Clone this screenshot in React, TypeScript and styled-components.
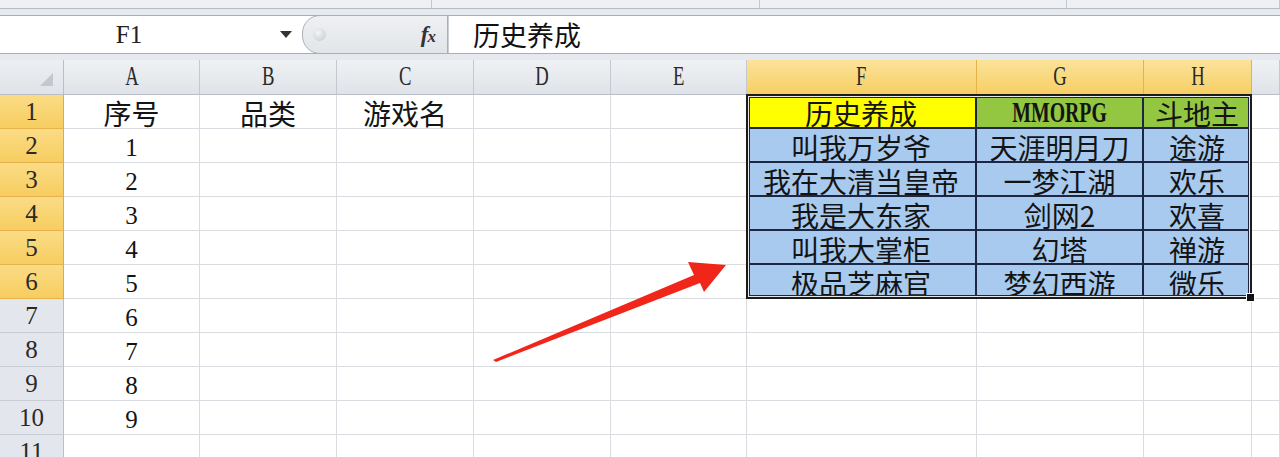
import React from 'react';
import styled, { createGlobalStyle } from 'styled-components';

const GlobalStyle = createGlobalStyle`
  html, body {
    margin: 0;
    padding: 0;
    background: #ffffff;
  }
  body {
    font-family: "Noto Sans CJK SC", "Liberation Sans", sans-serif;
  }
`;

const latinFont = '"Liberation Serif", "DejaVu Serif", serif';

const Screen = styled.div`
  position: relative;
  width: 1280px;
  height: 457px;
  overflow: hidden;
  background: #e6e9ed;
`;

const RibbonEdge = styled.div`
  display: grid;
  grid-template-columns: 432px 328px 307px 1fr;
  height: 8px;
  border-bottom: 1px solid #b4bcc6;
  background: #eef0f3;

  & > div {
    border-right: 1px solid #c4cad2;
  }
`;

const FormulaRow = styled.div`
  display: flex;
  height: 37px;
  margin: 6px 0 6px;
  background: #ffffff;
  border-top: 1px solid #a7afb9;
  border-bottom: 1px solid #a7afb9;
`;

const NameBox = styled.div`
  display: flex;
  align-items: center;
  width: 302px;
  font-family: ${latinFont};
  font-size: 25px;
  color: #222;
`;

const NameText = styled.span`
  flex: 1;
  text-align: center;
  padding-right: 22px;
`;

const DropArrow = styled.span`
  width: 0;
  height: 0;
  margin-right: 10px;
  border-left: 6px solid transparent;
  border-right: 6px solid transparent;
  border-top: 7px solid #333;
`;

const FxArea = styled.div`
  display: flex;
  align-items: center;
  justify-content: space-between;
  width: 146px;
  padding: 0 12px 0 10px;
  box-sizing: border-box;
  background: linear-gradient(#eef0f3, #e2e5e9);
  border: 1px solid #a9b0ba;
  border-radius: 18px 0 0 18px;
  margin: -1px 0;
`;

const Knob = styled.span`
  width: 13px;
  height: 13px;
  border-radius: 50%;
  background: radial-gradient(circle at 40% 35%, #f4f4f4, #c4c7cc);
`;

const Fx = styled.span`
  font-family: "Liberation Serif", serif;
  font-style: italic;
  font-weight: bold;
  font-size: 23px;
  color: #333;
  letter-spacing: -1px;

  & sub {
    font-size: 17px;
    vertical-align: 0;
  }
`;

const FormulaInput = styled.div`
  flex: 1;
  display: flex;
  align-items: center;
  padding-left: 24px;
  border-left: 1px solid #c9ced5;
  font-size: 27px;
  color: #111;
`;

const Sheet = styled.div`
  display: grid;
  grid-template-columns: 64px 136px 137px 137px 137px 136px 230px 167px 108px 1fr;
  grid-template-rows: 35px repeat(11, 34px);
  background: #ffffff;
`;

const Corner = styled.div`
  grid-row: 1;
  grid-column: 1;
  position: relative;
  background: linear-gradient(#eceff3, #dfe3e8);
  border-right: 1px solid #b8bfc8;
  border-bottom: 1px solid #b8bfc8;

  &::after {
    content: '';
    position: absolute;
    right: 10px;
    bottom: 8px;
    border-left: 13px solid transparent;
    border-bottom: 13px solid #c3c8cf;
  }
`;

const ColHead = styled.div<{ $col: number; $active?: boolean }>`
  grid-row: 1;
  grid-column: ${(p) => p.$col};
  display: flex;
  align-items: center;
  justify-content: center;
  font-family: ${latinFont};
  font-size: 22px;
  color: #2a2a2a;
  background: ${(p) =>
    p.$active ? 'linear-gradient(#fbe39b, #f7cf63)' : 'linear-gradient(#eff1f4, #dfe3e8)'};
  border-right: 1px solid ${(p) => (p.$active ? '#e7b24a' : '#c3c9d1')};
  border-bottom: 1px solid ${(p) => (p.$active ? '#e9a93a' : '#b8bfc8')};
  box-sizing: border-box;

  & > span {
    display: inline-block;
    transform: scale(0.85, 1.2);
  }
`;

const RowHead = styled.div<{ $row: number; $active?: boolean }>`
  grid-row: ${(p) => p.$row};
  grid-column: 1;
  display: flex;
  align-items: center;
  justify-content: center;
  font-family: ${latinFont};
  font-size: 25px;
  color: #2a2a2a;
  background: ${(p) => (p.$active ? 'linear-gradient(#fbdc86, #f6cd5f)' : '#e3e7ed')};
  border-right: 1px solid ${(p) => (p.$active ? '#e9a93a' : '#b8bfc8')};
  border-bottom: 1px solid ${(p) => (p.$active ? '#e7b24a' : '#c5ccd5')};
  box-sizing: border-box;
`;

type Fill = 'yellow' | 'green' | 'blue';

const fills: Record<Fill, string> = {
  yellow: '#ffff00',
  green: '#93c641',
  blue: '#a8caef',
};

const Cell = styled.div<{ $row: number; $col: number; $fill?: Fill; $latin?: boolean }>`
  grid-row: ${(p) => p.$row};
  grid-column: ${(p) => p.$col};
  display: flex;
  align-items: center;
  justify-content: center;
  white-space: nowrap;
  box-sizing: border-box;
  background: ${(p) => (p.$fill ? fills[p.$fill] : '#ffffff')};
  border-right: ${(p) => (p.$fill ? '2px solid #1d2744' : '1px solid #d9dce0')};
  border-bottom: ${(p) => (p.$fill ? '2px solid #1d2744' : '1px solid #d9dce0')};
  font-family: ${(p) => (p.$latin ? latinFont : '"Noto Sans CJK SC", sans-serif')};
  font-size: ${(p) => (p.$latin ? '25px' : '28px')};
  color: #141414;
  line-height: 1;
  padding-top: 3px;
`;

const Tall = styled.span`
  display: inline-block;
  font-size: 22px;
  font-weight: bold;
  transform: scale(0.9, 1.35);
`;

const Frame = styled.div`
  grid-row: 2 / 8;
  grid-column: 7 / 10;
  position: relative;
  margin: -1px 0 0 -1px;
  border: 2px solid #1c1c1c;
  box-shadow: inset 0 0 0 1px #e8e8e8, inset 0 0 0 2px #1d2744;
  pointer-events: none;
  z-index: 2;
`;

const FillHandle = styled.span`
  position: absolute;
  right: -5px;
  bottom: -5px;
  width: 7px;
  height: 7px;
  background: #111;
  border: 1px solid #fff;
`;

const Arrow = styled.svg`
  position: absolute;
  left: 480px;
  top: 250px;
  z-index: 3;
`;

const columns = ['A', 'B', 'C', 'D', 'E', 'F', 'G', 'H', 'I'];

interface CellData {
  text: string;
  fill?: Fill;
  latin?: boolean;
}

const rowsData: Record<number, Record<number, CellData>> = {
  1: {
    2: { text: '序号' },
    3: { text: '品类' },
    4: { text: '游戏名' },
    7: { text: '历史养成', fill: 'yellow' },
    8: { text: 'MMORPG', fill: 'green', latin: true },
    9: { text: '斗地主', fill: 'green' },
  },
  2: { 7: { text: '叫我万岁爷', fill: 'blue' }, 8: { text: '天涯明月刀', fill: 'blue' }, 9: { text: '途游', fill: 'blue' } },
  3: { 7: { text: '我在大清当皇帝', fill: 'blue' }, 8: { text: '一梦江湖', fill: 'blue' }, 9: { text: '欢乐', fill: 'blue' } },
  4: { 7: { text: '我是大东家', fill: 'blue' }, 8: { text: '剑网2', fill: 'blue' }, 9: { text: '欢喜', fill: 'blue' } },
  5: { 7: { text: '叫我大掌柜', fill: 'blue' }, 8: { text: '幻塔', fill: 'blue' }, 9: { text: '禅游', fill: 'blue' } },
  6: { 7: { text: '极品芝麻官', fill: 'blue' }, 8: { text: '梦幻西游', fill: 'blue' }, 9: { text: '微乐', fill: 'blue' } },
};

const App: React.FC = () => {
  const rows = Array.from({ length: 11 }, (_, i) => i + 1);

  return (
    <Screen>
      <GlobalStyle />
      <RibbonEdge>
        <div />
        <div />
        <div />
        <div />
      </RibbonEdge>
      <FormulaRow>
        <NameBox>
          <NameText>F1</NameText>
          <DropArrow />
        </NameBox>
        <FxArea>
          <Knob />
          <Fx>
            f<sub>x</sub>
          </Fx>
        </FxArea>
        <FormulaInput>历史养成</FormulaInput>
      </FormulaRow>
      <Sheet>
        <Corner />
        {columns.map((c, i) => (
          <ColHead key={c} $col={i + 2} $active={i >= 5 && i <= 7}>
            <span>{c !== 'I' ? c : ''}</span>
          </ColHead>
        ))}
        {rows.map((r) => (
          <React.Fragment key={r}>
            <RowHead $row={r + 1} $active={r <= 6}>
              {r}
            </RowHead>
            {columns.map((_, ci) => {
              const col = ci + 2;
              const data = rowsData[r]?.[col];
              let text = data?.text ?? '';
              let latin = data?.latin;
              if (col === 2 && r >= 2 && r <= 10) {
                text = String(r - 1);
                latin = true;
              }
              return (
                <Cell key={col} $row={r + 1} $col={col} $fill={data?.fill} $latin={latin}>
                  {data?.latin ? <Tall>{text}</Tall> : text}
                </Cell>
              );
            })}
          </React.Fragment>
        ))}
        <Frame>
          <FillHandle />
        </Frame>
      </Sheet>
      <Arrow width="260" height="120" viewBox="0 0 260 120">
        <polygon
          points="13,110 214,25 208,12 246,15 224,42 220,33 16,112"
          fill="#f0261b"
        />
      </Arrow>
    </Screen>
  );
};

export default App;
